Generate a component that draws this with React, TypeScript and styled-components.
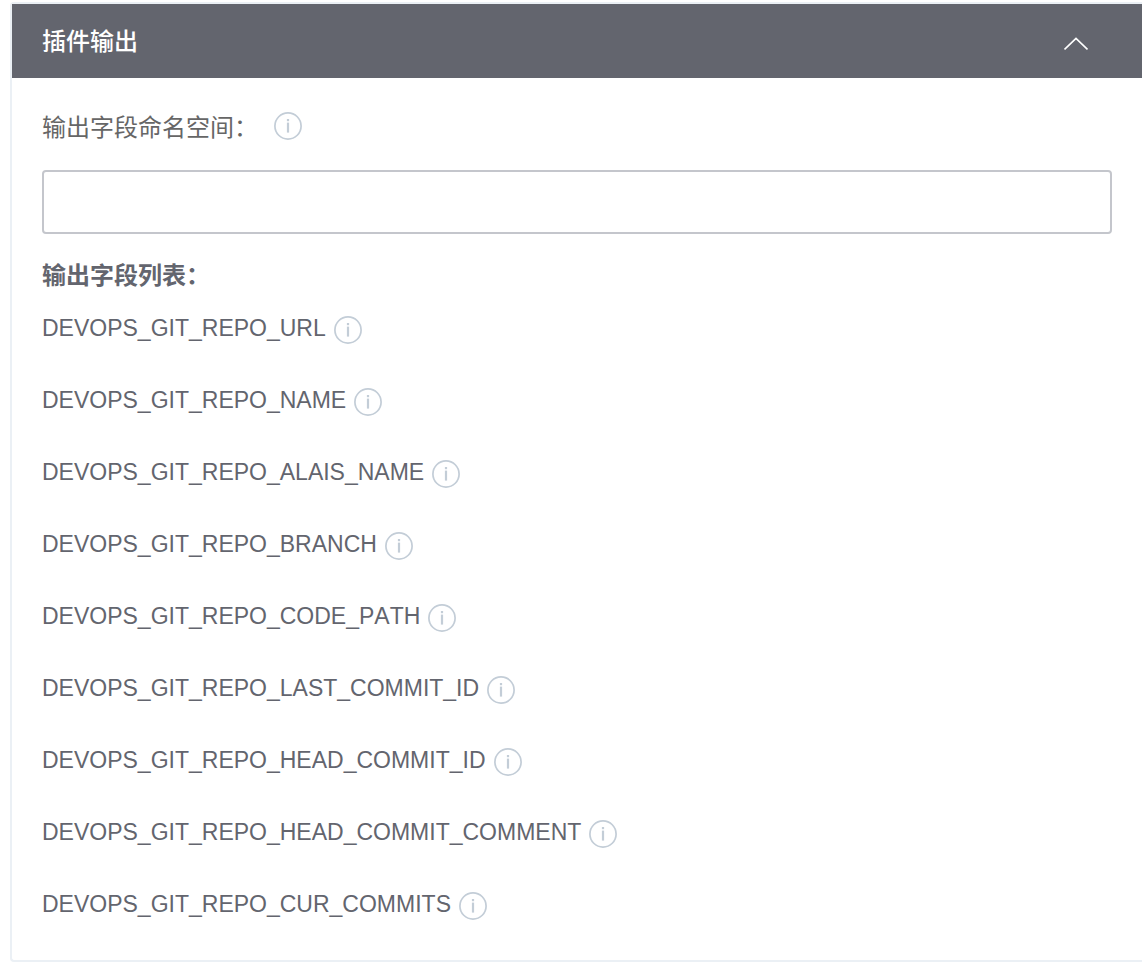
import React, { useState } from 'react';
import styled, { createGlobalStyle } from 'styled-components';

const GlobalStyle = createGlobalStyle`
  * { box-sizing: border-box; }
  body {
    margin: 0;
    background: #fff;
    color: #63656e;
    font-family: "Liberation Sans", "Noto Sans CJK SC", sans-serif;
    font-size: 24px;
    line-height: 36px;
  }
`;

const Panel = styled.section`
  margin: 2px 0 0 10px;
  border: 2px solid #ebf0f5;
  border-right: none;
  border-radius: 4px 0 0 4px;
`;

const Header = styled.button`
  display: flex;
  align-items: center;
  justify-content: space-between;
  width: 100%;
  height: 74px;
  padding: 2px 54px 0 30px;
  border: none;
  background: #63656e;
  color: #fff;
  font: inherit;
  font-weight: 500;
  text-align: left;
  cursor: pointer;
`;

const Chevron = styled.svg<{ $open: boolean }>`
  width: 24px;
  height: 14px;
  margin-top: 4px;
  transform: ${({ $open }) => ($open ? 'none' : 'rotate(180deg)')};
`;

const Body = styled.div`
  padding: 30px 30px 38px;
`;

const LabelRow = styled.div`
  display: flex;
  align-items: center;
  gap: 16px;
  height: 36px;
  color: #666;
`;

const Label = styled.label`
  padding-top: 3px;
`;

const TextInput = styled.input`
  display: block;
  width: 100%;
  height: 64px;
  margin: 26px 0 24px;
  padding: 0 20px;
  border: 2px solid #c4c6cc;
  border-radius: 4px;
  background: #fff;
  color: inherit;
  font: inherit;
  outline: none;
`;

const ListTitle = styled.h2`
  margin: 0;
  font-size: 24px;
  font-weight: 700;
  line-height: 36px;
`;

const FieldList = styled.ul`
  display: flex;
  flex-direction: column;
  gap: 36px;
  margin: 16px 0 0;
  padding: 0;
  list-style: none;
`;

const Field = styled.li`
  display: flex;
  align-items: center;
  gap: 8px;
  height: 36px;
  font-size: 23px;
  font-kerning: none;
`;

const InfoSvg = styled.svg`
  flex: none;
  width: 28px;
  height: 28px;
`;

const FieldInfo = styled.span`
  display: flex;
  padding-top: 3px;
`;

const fields = [
  'DEVOPS_GIT_REPO_URL',
  'DEVOPS_GIT_REPO_NAME',
  'DEVOPS_GIT_REPO_ALAIS_NAME',
  'DEVOPS_GIT_REPO_BRANCH',
  'DEVOPS_GIT_REPO_CODE_PATH',
  'DEVOPS_GIT_REPO_LAST_COMMIT_ID',
  'DEVOPS_GIT_REPO_HEAD_COMMIT_ID',
  'DEVOPS_GIT_REPO_HEAD_COMMIT_COMMENT',
  'DEVOPS_GIT_REPO_CUR_COMMITS',
];

const InfoIcon = () => (
  <InfoSvg viewBox="0 0 28 28" aria-hidden="true">
    <circle cx="14" cy="14" r="13.1" fill="none" stroke="#c3cdd7" strokeWidth="1.7" />
    <rect x="12.9" y="7" width="2.2" height="2.2" fill="#c3cdd7" />
    <rect x="12.9" y="10.6" width="2.2" height="10" fill="#c3cdd7" />
  </InfoSvg>
);

export default function App() {
  const [open, setOpen] = useState(true);
  const [namespace, setNamespace] = useState('');

  return (
    <>
      <GlobalStyle />
      <Panel>
        <Header type="button" aria-expanded={open} onClick={() => setOpen(!open)}>
          <span>插件输出</span>
          <Chevron $open={open} viewBox="0 0 24 14" aria-hidden="true">
            <path d="M0.5 12.5 L12 1.5 L23.5 12.5" fill="none" stroke="#fff" strokeWidth="1.7" />
          </Chevron>
        </Header>
        {open && (
          <Body>
            <LabelRow>
              <Label htmlFor="namespace">输出字段命名空间：</Label>
              <InfoIcon />
            </LabelRow>
            <TextInput
              id="namespace"
              type="text"
              value={namespace}
              onChange={(e) => setNamespace(e.target.value)}
            />
            <ListTitle>输出字段列表：</ListTitle>
            <FieldList>
              {fields.map((name) => (
                <Field key={name}>
                  <span>{name}</span>
                  <FieldInfo>
                    <InfoIcon />
                  </FieldInfo>
                </Field>
              ))}
            </FieldList>
          </Body>
        )}
      </Panel>
    </>
  );
}
